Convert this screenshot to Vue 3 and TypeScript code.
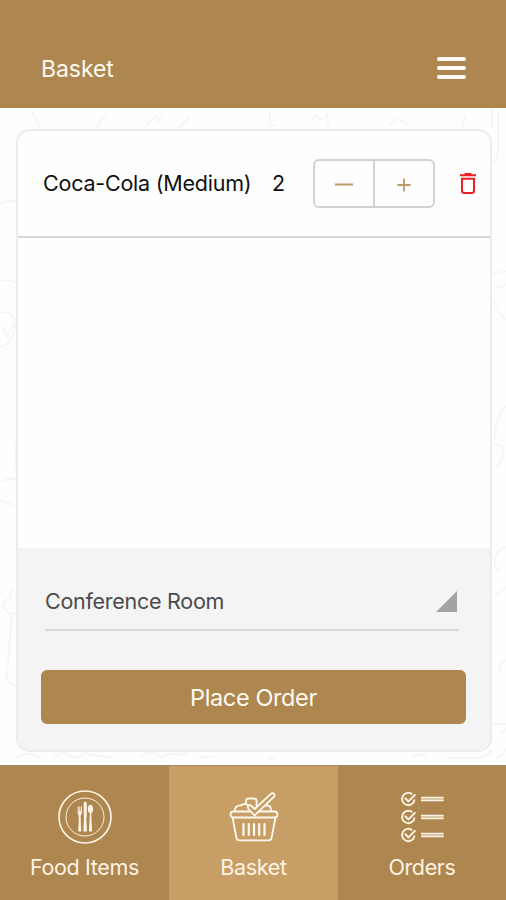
<script setup lang="ts">
import { ref } from 'vue'

interface BasketItem {
  name: string
  quantity: number
}

const items = ref<BasketItem[]>([{ name: 'Coca-Cola (Medium)', quantity: 2 }])
const active = ref('Basket')
const checks: number[] = [0, 18, 36]

function change(item: BasketItem, by: number): void {
  item.quantity = Math.max(1, item.quantity + by)
}

function remove(index: number): void {
  items.value.splice(index, 1)
}
</script>

<template>
  <div class="screen">
    <header class="topbar">
      <h1 class="title">Basket</h1>
      <button class="menu" aria-label="Menu"><span></span><span></span><span></span></button>
    </header>

    <main class="content">
      <svg class="doodles" viewBox="0 0 506 657" fill="none" stroke="#f6f6f6" stroke-width="2" aria-hidden="true">
        <path d="M32 4l9 16M108 4L96 20M146 18l9-10 4 5 4-7M178 20l12-12M270 5v12h6M311 15l4-8 6 5 6-6 1 12M390 18q8-13 18 0M466 8q-4 6-4 12M492 0v20M498 5v38q0 12-10 11" />
        <path d="M0 95q8-3 16-2M0 173q10-2 16 2M0 205q13-4 15 12-1 18-15 22M2 218l5 10 6-12M0 374q8-4 17-3M0 393q9 1 17 7M16 335v27M14 480q-5 2-4 10-8 3-6 10 3 6 12 6M12 505l-5 60q0 12 9 13" />
        <path d="M493 166l13-3M493 180q8 0 13-4M493 190q6 18 13 22M506 298q-10 10-12 34M493 336l8 2 3 10-8 12M506 439q-11 3-12 16l6 10M494 487l12-8M506 552q-8 6-6 14M493 616h13M498 625q7 0 8-5" />
        <path d="M16 650q12-8 23 0M54 650q8-8 14-3 8 6 16-2l14 3 14 2M139 649q14-9 22 0 9-6 19-2l8-3M200 649h14M268 650h7M412 650q8-7 14 0M448 650h24q16 0 20-9M496 650q8-3 10-10" />
      </svg>

      <section class="card">
        <ul class="items">
          <li v-for="(item, index) in items" :key="item.name" class="item">
            <span class="name">{{ item.name }}</span>
            <span class="quantity">{{ item.quantity }}</span>
            <div class="stepper">
              <button aria-label="Decrease" @click="change(item, -1)">
                <svg width="20" height="20" viewBox="0 0 20 20"><path d="M1 10.500h18" /></svg>
              </button>
              <button aria-label="Increase" @click="change(item, 1)">
                <svg width="20" height="20" viewBox="0 0 20 20"><path d="M3.500 11h13M10 4.500v13" /></svg>
              </button>
            </div>
            <button class="remove" aria-label="Remove" @click="remove(index)">
              <svg width="18" height="22" viewBox="0 0 18 22" fill="none" stroke="#f01f25" stroke-width="2">
                <path d="M1 2.200h16M5.500 1h7" />
                <path d="M3 5.700h12v12q0 2.200-2.200 2.200H5.200Q3 19.900 3 17.700z" />
              </svg>
            </button>
          </li>
        </ul>

        <div class="checkout">
          <button class="room">
            <span>Conference Room</span>
            <svg width="21" height="21" viewBox="0 0 21 21"><path d="M21 0v21H0z" fill="#a3a3a3" /></svg>
          </button>
          <button class="place">Place Order</button>
        </div>
      </section>
    </main>

    <nav class="tabs">
      <button :class="['tab', { active: active === 'Food Items' }]" @click="active = 'Food Items'">
        <svg width="56" height="56" viewBox="0 0 56 56" fill="none" stroke="#fff3e3">
          <circle cx="28" cy="28" r="26" stroke-width="1.700" />
          <circle cx="28" cy="28" r="19" stroke-width="1" />
          <g fill="#fff3e3" stroke="none">
            <path d="M20.700 17.500h1v5h.6v-5h1v5h.6v-5h1v7l-1.200 2v6l.6 10h-3.200l.6-10v-6l-1-2z" />
            <path d="M26.600 14.500q0-2 1.500-2 1.700 0 1.700 2.500v13l-.5 1 .7 13.500h-3.600l.5-13.500z" />
            <ellipse cx="33.500" cy="20" rx="2.600" ry="4.300" />
            <path d="M32.900 23h1.300l.9 19.500h-3.200z" />
          </g>
        </svg>
        <span class="label">Food Items</span>
      </button>
      <button :class="['tab', { active: active === 'Basket' }]" @click="active = 'Basket'">
        <svg width="56" height="56" viewBox="0 0 56 56" fill="none" stroke="#fff8ee" stroke-width="1.800" stroke-linejoin="round" stroke-linecap="round">
          <path d="M8.500 22q1-6 6.500-5.500 3-3 8 0 3 1 4 5M20 14.500V12q0-2.500 2.500-2.500H28q2.500 0 2.500 2v5M37 16.500h4.500q3.500 0 3.500 5.500" />
          <rect x="4.500" y="22.500" width="47" height="6" rx="3" />
          <path d="M6.500 28.500l4 20.500q.5 2.300 2.500 2.300h30q2 0 2.500-2.300l4-20.500" />
          <path d="M17.500 35v11M22.800 35v11M28 35v11M33.200 35v11M38.500 35v11" stroke-width="2.200" />
          <path class="tick" d="M22 17.500q1.500-2.500 3.500-.5l3.200 3L44.800 4.900q1.900-1.600 3.200-.1 1.300 1.500-.2 3L28.500 26.500l-6-6.500q-1-1.200-.5-2.500z" />
        </svg>
        <span class="label">Basket</span>
      </button>
      <button :class="['tab', { active: active === 'Orders' }]" @click="active = 'Orders'">
        <svg width="56" height="56" viewBox="0 0 56 56" fill="none" stroke="#fff3e3">
          <g v-for="y in checks" :key="y" :transform="`translate(0 ${y})`">
            <path d="M18.300 5.200A6.200 6.200 0 1 0 20.500 10.500" stroke-width="1.900" />
            <path d="M10.800 8.700l3.600 3.700 7-7" stroke-width="2" />
            <path d="M27 8.500h22.700M27 11.500h22.700" stroke-width="1.700" />
            <path d="M27 10h22.700" stroke-width="1.500" opacity=".6" />
          </g>
        </svg>
        <span class="label">Orders</span>
      </button>
    </nav>
  </div>
</template>

<style>
body {
  margin: 0;
}
</style>

<style scoped>
.screen {
  display: flex;
  flex-direction: column;
  width: 506px;
  height: 900px;
  overflow: hidden;
  background: #fefefe;
  color: #111;
  font-family: Inter, 'Liberation Sans', sans-serif;
}
button {
  padding: 0;
  border: 0;
  background: none;
  color: inherit;
  font: inherit;
  letter-spacing: inherit;
  cursor: pointer;
}
svg {
  display: block;
}
.topbar {
  box-sizing: border-box;
  flex: 0 0 108px;
  display: flex;
  align-items: center;
  justify-content: space-between;
  padding: 28px 40px 0 41px;
  background: #ad8650;
}
.title {
  margin: 0;
  padding-top: 2px;
  color: #fffaf1;
  font-size: 23px;
  font-weight: 400;
  letter-spacing: -0.050px;
  line-height: 28px;
}
.menu {
  display: flex;
  flex-direction: column;
  gap: 5px;
  width: 29px;
}
.menu span {
  height: 4px;
  border-radius: 2px;
  background: #fffdf8;
}
.content {
  flex: 0 0 657px;
  display: grid;
}
.doodles,
.card {
  grid-area: 1 / 1;
}
.doodles {
  width: 506px;
  height: 657px;
}
.card {
  z-index: 1;
  box-sizing: border-box;
  display: flex;
  flex-direction: column;
  margin: 21px 14px 13px 16px;
  border: 2px solid #ececec;
  border-radius: 14px;
  overflow: hidden;
  background: #fefefe;
}
.items {
  flex: 1;
  margin: 0;
  padding: 0;
  list-style: none;
}
.item {
  box-sizing: border-box;
  display: flex;
  align-items: center;
  height: 107px;
  padding-left: 25px;
  border-bottom: 2px solid #d6d6d6;
  font-size: 21.500px;
}
.name,
.quantity {
  padding-bottom: 2px;
}
.name {
  width: 229px;
  letter-spacing: -0.230px;
  white-space: nowrap;
}
.quantity {
  width: 41px;
}
.stepper {
  box-sizing: border-box;
  display: flex;
  width: 122px;
  height: 49px;
  border: 2px solid #d2d2d2;
  border-radius: 6px;
}
.stepper button {
  flex: 1;
  display: grid;
  place-items: center;
}
.stepper button + button {
  border-left: 2px solid #d2d2d2;
}
.stepper path {
  stroke: #bd9a67;
  stroke-width: 1.800;
}
.remove {
  margin-left: 24px;
}
.checkout {
  box-sizing: border-box;
  height: 202px;
  padding: 27px 23px 0;
  background: #f4f4f4;
}
.room {
  box-sizing: border-box;
  display: flex;
  align-items: center;
  justify-content: space-between;
  width: 414px;
  height: 56px;
  margin-left: 4px;
  padding: 0 2px 2px 0;
  border-bottom: 2px solid #d8d8d8;
  color: #4b4b4b;
  font-size: 21.500px;
  letter-spacing: -0.270px;
}
.place {
  display: block;
  width: 425px;
  height: 54px;
  margin-top: 39px;
  border-radius: 6px;
  background: #ad8650;
  color: #fffaf1;
  font-size: 23.500px;
  letter-spacing: -0.380px;
}
.tabs {
  flex: 1;
  display: grid;
  grid-template-columns: 169px 169px 168px;
  border-top: 1px solid #a08b6c;
}
.tab {
  display: flex;
  flex-direction: column;
  align-items: center;
  padding-top: 23px;
  background: #ad8650;
  color: #fff3e3;
}
.tab.active {
  background: #c89e67;
}
.tick {
  fill: #c89e67;
}
.label {
  margin-top: 8px;
  font-size: 21.500px;
  letter-spacing: -0.350px;
  line-height: 28px;
}
</style>
